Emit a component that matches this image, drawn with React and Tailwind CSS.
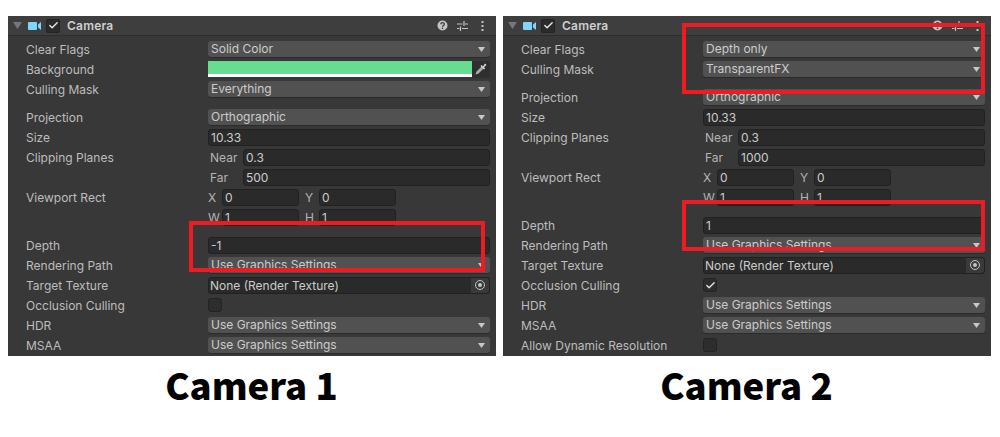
import { Check } from "lucide-react";

function Triangle({ className, w = 7, h = 5 }) {
  return (
    <svg width={w} height={h} viewBox="0 0 9 7" preserveAspectRatio="none" className={className}>
      <path d="M0 0h9L4.5 7z" fill="currentColor" />
    </svg>
  );
}

function Row({ label, children, gap }) {
  return (
    <div className={`flex h-5 items-center pl-[18px] pr-[6px] ${gap ? "mt-2" : ""}`}>
      <div className="w-[182px] shrink-0 whitespace-nowrap pt-px text-[#bdbdbd]">{label}</div>
      <div className="flex h-4 min-w-0 flex-1 items-center">{children}</div>
    </div>
  );
}

function Dropdown({ value }) {
  return (
    <div className="flex h-4 flex-1 items-center justify-between rounded-[3px] bg-[#515151] pl-[3px] pr-[5px] text-[#cccccc] shadow-[0_1px_0_#2b2b2b]">
      <span className="whitespace-nowrap">{value}</span>
      <Triangle className="text-[#c8c8c8]" />
    </div>
  );
}

function Field({ value, className = "flex-1" }) {
  return (
    <div className={`flex h-[17px] items-center rounded-[3px] border border-[#212121] bg-[#2a2a2a] pl-[2px] pt-px text-[#cccccc] ${className}`}>
      {value}
    </div>
  );
}

function Pair({ a, b, x, y }) {
  return (
    <>
      <span className="w-[14px] pt-px text-[#b4b4b4]">{a}</span>
      <Field value={x} className="w-[77px]" />
      <span className="ml-[6px] w-[14px] pt-px text-[#b4b4b4]">{b}</span>
      <Field value={y} className="w-[77px]" />
    </>
  );
}

function Labeled({ label, value }) {
  return (
    <>
      <span className="w-[35px] pt-px pl-[2px] text-[#b4b4b4]">{label}</span>
      <Field value={value} />
    </>
  );
}

function ObjectField({ value }) {
  return (
    <div className="flex h-[17px] flex-1 items-center justify-between rounded-[3px] border border-[#212121] bg-[#2a2a2a] pl-[1px] text-[#cccccc]">
      <span className="pt-px">{value}</span>
      <div className="flex h-full w-[18px] items-center justify-center rounded-r-[3px] bg-[#3a3a3a]">
        <div className="flex h-[10px] w-[10px] items-center justify-center rounded-full border border-[#c4c4c4]">
          <div className="h-1 w-1 rounded-full bg-[#c4c4c4]" />
        </div>
      </div>
    </div>
  );
}

function Toggle({ on }) {
  return (
    <div className="flex h-[14px] w-[14px] items-center justify-center rounded-[3px] border border-[#232323] bg-[#2d2d2d]">
      {on && <Check size={11} strokeWidth={3} className="text-[#e4e4e4]" />}
    </div>
  );
}

function Header() {
  return (
    <div className="flex h-5 items-center border-b border-[#2d2d2d] bg-[#3e3e3e] pl-[5px] pr-[12px]">
      <Triangle w={9} h={7} className="text-[#777777]" />
      <svg width="13" height="10" viewBox="0 0 13 10" className="ml-[6px] text-[#7fd5fb]">
        <rect x="0" y="1" width="9" height="8" rx="1" fill="currentColor" />
        <path d="M10 3.5 13 1v8L10 6.5z" fill="currentColor" />
      </svg>
      <div className="ml-[5px]">
        <div className="flex h-[14px] w-[14px] items-center justify-center rounded-[2px] border border-[#232323] bg-[#2b2b2b]">
          <Check size={11} strokeWidth={3} className="text-[#e8e8e8]" />
        </div>
      </div>
      <span className="ml-[7px] pt-px font-semibold tracking-[0.2px] text-[#cfcfcf]">Camera</span>
      <div className="ml-auto flex items-center gap-[9px] text-[#c4c4c4]">
        <svg width="11" height="11" viewBox="0 0 11 11">
          <circle cx="5.5" cy="5.5" r="5" fill="currentColor" />
          <path d="M3.8 4.2c0-2.2 3.5-2.2 3.5 0 0 1.300-1.800 1.200-1.800 2.500" fill="none" stroke="#3e3e3e" strokeWidth="1.300" />
          <rect x="4.800" y="7.600" width="1.400" height="1.400" fill="#3e3e3e" />
        </svg>
        <svg width="11" height="10" viewBox="0 0 11 10" fill="none" stroke="currentColor">
          <path d="M0 3h5.500M8 3h3M0 7.500h2.500M5 7.500h6" />
          <path d="M7 0v5M3.500 5.500V10" strokeWidth="1.200" />
        </svg>
        <svg width="3" height="10" viewBox="0 0 3 10" className="ml-[4px]" fill="currentColor">
          <rect x="0.500" y="0" width="2" height="2" />
          <rect x="0.500" y="4" width="2" height="2" />
          <rect x="0.500" y="8" width="2" height="2" />
        </svg>
      </div>
    </div>
  );
}

function Clipping({ far }) {
  return (
    <>
      <Row label="Clipping Planes"><Labeled label="Near" value="0.3" /></Row>
      <Row label=""><Labeled label="Far" value={far} /></Row>
      <Row label="Viewport Rect"><Pair a="X" b="Y" x="0" y="0" /></Row>
      <Row label=""><Pair a="W" b="H" x="1" y="1" /></Row>
    </>
  );
}

function Panel({ children }) {
  return (
    <div className="h-[340px] w-[488px] overflow-hidden bg-[#383838] text-[12px] leading-none">
      <Header />
      <div className="pt-[3px]">{children}</div>
    </div>
  );
}

function RedBox({ className }) {
  return <div className={`absolute border-4 border-[#ed1c24] ${className}`} />;
}

const graphics = "Use Graphics Settings";

export default function App() {
  return (
    <div className="relative h-[437px] w-[1000px] overflow-hidden bg-white pt-4 font-['Inter',sans-serif]">
      <div className="flex gap-[7px] pl-2">
        <Panel>
          <Row label="Clear Flags"><Dropdown value="Solid Color" /></Row>
          <Row label="Background">
            <div className="flex h-[16px] flex-1 flex-col bg-white">
              <div className="h-[13px] bg-[#66dd91]" />
            </div>
            <div className="flex h-[17px] w-[18px] items-center justify-center rounded-r-[3px] bg-[#2f2f2f]">
              <svg width="12" height="12" viewBox="0 0 12 12">
                <path d="M0.500 11.500l0.800-2.800 5-5 2 2-5 5z" fill="#a8a8a8" />
                <path d="M6.500 2l1.500 1.500L10 0.500l1.500 1.500L9 4l1 1.500L9 6.500 5.500 3z" fill="#e0e0e0" />
              </svg>
            </div>
          </Row>
          <Row label="Culling Mask"><Dropdown value="Everything" /></Row>
          <Row label="Projection" gap><Dropdown value="Orthographic" /></Row>
          <Row label="Size"><Field value="10.33" /></Row>
          <Clipping far="500" />
          <Row label="Depth" gap><Field value="-1" /></Row>
          <Row label="Rendering Path"><Dropdown value={graphics} /></Row>
          <Row label="Target Texture"><ObjectField value="None (Render Texture)" /></Row>
          <Row label="Occlusion Culling"><Toggle /></Row>
          <Row label="HDR"><Dropdown value={graphics} /></Row>
          <Row label="MSAA"><Dropdown value={graphics} /></Row>
        </Panel>
        <Panel>
          <Row label="Clear Flags"><Dropdown value="Depth only" /></Row>
          <Row label="Culling Mask"><Dropdown value="TransparentFX" /></Row>
          <Row label="Projection" gap><Dropdown value="Orthographic" /></Row>
          <Row label="Size"><Field value="10.33" /></Row>
          <Clipping far="1000" />
          <Row label="Depth" gap><Field value="1" /></Row>
          <Row label="Rendering Path"><Dropdown value={graphics} /></Row>
          <Row label="Target Texture"><ObjectField value="None (Render Texture)" /></Row>
          <Row label="Occlusion Culling"><Toggle on /></Row>
          <Row label="HDR"><Dropdown value={graphics} /></Row>
          <Row label="MSAA"><Dropdown value={graphics} /></Row>
          <Row label="Allow Dynamic Resolution"><Toggle /></Row>
        </Panel>
      </div>
      <div className="flex gap-[7px] pl-2 pt-[3px] font-['Noto_Sans_CJK_JP',sans-serif] text-[36.5px] font-black leading-[52px] text-black">
        <div className="w-[487px] text-center">Camera 1</div>
        <div className="w-[489px] text-center">Camera 2</div>
      </div>
      <RedBox className="left-[189px] top-[221px] h-[51px] w-[296px]" />
      <RedBox className="left-[682px] top-[23px] h-[71px] w-[303px]" />
      <RedBox className="left-[682px] top-[200px] h-[51px] w-[303px]" />
    </div>
  );
}
